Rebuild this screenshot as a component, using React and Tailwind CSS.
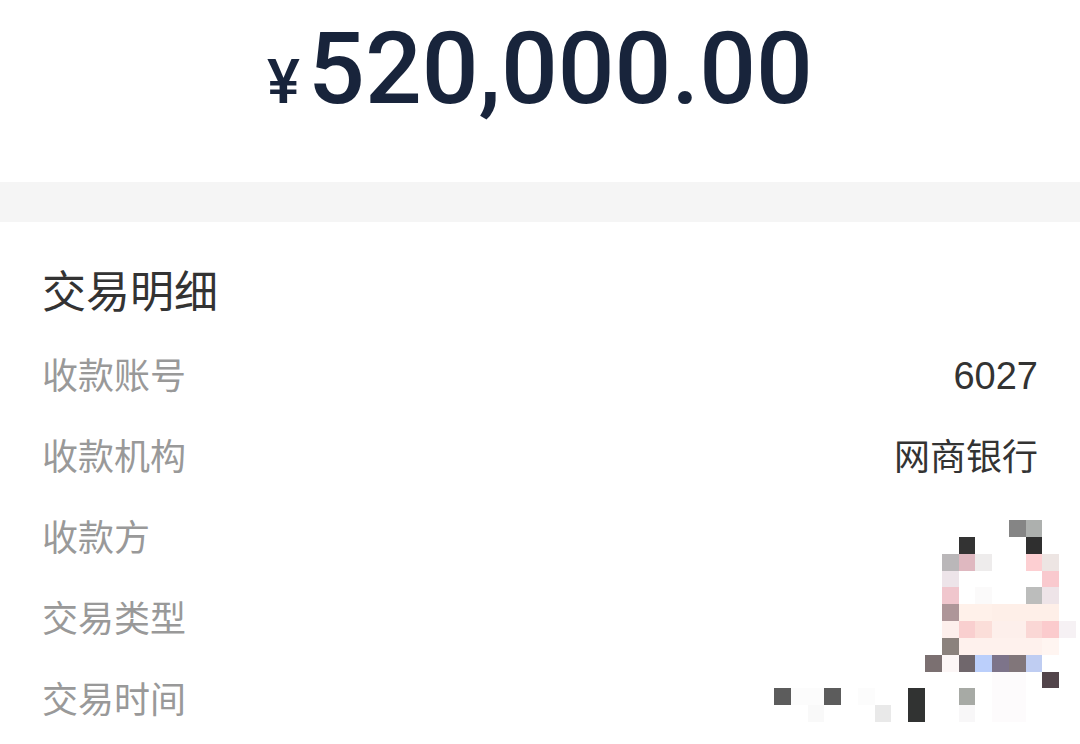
// ========================================
// Transaction data
// ========================================
const details = [
    { label: '收款账号', value: '6027', numeric: true },
    { label: '收款机构', value: '网商银行' },
    { label: '收款方', value: '' },
    { label: '交易类型', value: '' },
    { label: '交易时间', value: '' },
];

// [column, row, width, height, color] in mosaic cells
const mosaicCells = [
    [14, 0, 1, 1, '#858585'],
    [15, 0, 1, 1, '#adb0ae'],
    [11, 1, 1, 1, '#333333'],
    [15, 1, 1, 1, '#2f2f2f'],
    [10, 2, 1, 1, '#bab7b9'],
    [11, 2, 1, 1, '#dfb8c0'],
    [12, 2, 1, 1, '#eeecec'],
    [15, 2, 1, 1, '#fdcfd2'],
    [16, 2, 1, 1, '#ede5e3'],
    [10, 3, 1, 1, '#ede4e9'],
    [16, 3, 1, 1, '#f9c9ce'],
    [10, 4, 1, 1, '#f0c6cd'],
    [12, 4, 1, 1, '#fbfafa'],
    [15, 4, 1, 1, '#bcbdbc'],
    [16, 4, 1, 1, '#eee4e8'],
    [10, 5, 1, 1, '#ae9699'],
    [11, 5, 2, 1, '#fff1ea'],
    [13, 5, 4, 1, '#feefe8'],
    [10, 6, 1, 1, '#fdefec'],
    [11, 6, 1, 1, '#f9cfcf'],
    [12, 6, 1, 1, '#fbded9'],
    [13, 6, 2, 1, '#fdefeb'],
    [15, 6, 1, 1, '#fad7d5'],
    [16, 6, 1, 1, '#fbcbcd'],
    [17, 6, 1, 1, '#f6f1f4'],
    [10, 7, 1, 1, '#8b827d'],
    [11, 7, 5, 1, '#fef1ed'],
    [16, 7, 1, 1, '#fff5f1'],
    [9, 8, 1, 1, '#7b7071'],
    [10, 8, 1, 1, '#fcf6f6'],
    [11, 8, 1, 1, '#70676c'],
    [12, 8, 1, 1, '#bbcffb'],
    [13, 8, 1, 1, '#7d748a'],
    [14, 8, 1, 1, '#81767a'],
    [15, 8, 1, 1, '#bfcdf2'],
    [13, 9, 2, 3, '#fdfbfc'],
    [16, 9, 1, 1, '#52444a'],
    [0, 10, 1, 1, '#5c5c5c'],
    [1, 10, 2, 1, '#fcfcfc'],
    [3, 10, 1, 1, '#5c5c5c'],
    [5, 10, 1, 1, '#fcfcfc'],
    [8, 10, 1, 2, '#313332'],
    [11, 10, 1, 1, '#a7aaa5'],
    [2, 11, 1, 1, '#f9f9f9'],
    [6, 11, 1, 1, '#e9e9e9'],
    [11, 11, 1, 1, '#f8f7f8'],
];

const Mosaic = () => (
    <svg
        viewBox="0 0 18 12"
        preserveAspectRatio="none"
        shapeRendering="crispEdges"
        aria-hidden="true"
        className="absolute right-1 bottom-4 w-[302px] h-[202px] pointer-events-none"
    >
        {mosaicCells.map(([x, y, w, h, fill]) => (
            <rect key={`${x}-${y}`} x={x} y={y} width={w} height={h} fill={fill} />
        ))}
    </svg>
);

// ========================================
// Detail Row
// ========================================
const DetailRow = ({ label, value, numeric }) => (
    <div className="flex items-baseline justify-between">
        <dt className="text-[#999999]">{label}</dt>
        <dd
            className={
                numeric
                    ? "text-[#333333] text-[38px] leading-[54px] font-['Liberation_Sans',sans-serif]"
                    : 'text-[#333333]'
            }
        >
            {value}
        </dd>
    </div>
);

const App = () => {
    return (
        <main className="min-h-screen bg-white font-['Noto_Sans_CJK_SC',sans-serif]">
            {/* Amount */}
            <header className="flex items-baseline justify-center gap-2 pt-[9px] pb-10 font-['Roboto',sans-serif] font-medium text-[#18243b] leading-[120px]">
                <span className="text-[62px]">¥</span>
                <span className="text-[100px]">520,000.00</span>
            </header>

            <div className="h-10 bg-[#f5f5f5]" />

            {/* Details */}
            <section className="relative px-[42px] pt-[35px]">
                <h1 className="text-[44px] leading-[64px] text-[#333333]">交易明细</h1>
                <dl className="pt-3 text-[36px] leading-[81px]">
                    {details.map((item) => (
                        <DetailRow key={item.label} {...item} />
                    ))}
                </dl>
                <Mosaic />
            </section>
        </main>
    );
};

export default App;
